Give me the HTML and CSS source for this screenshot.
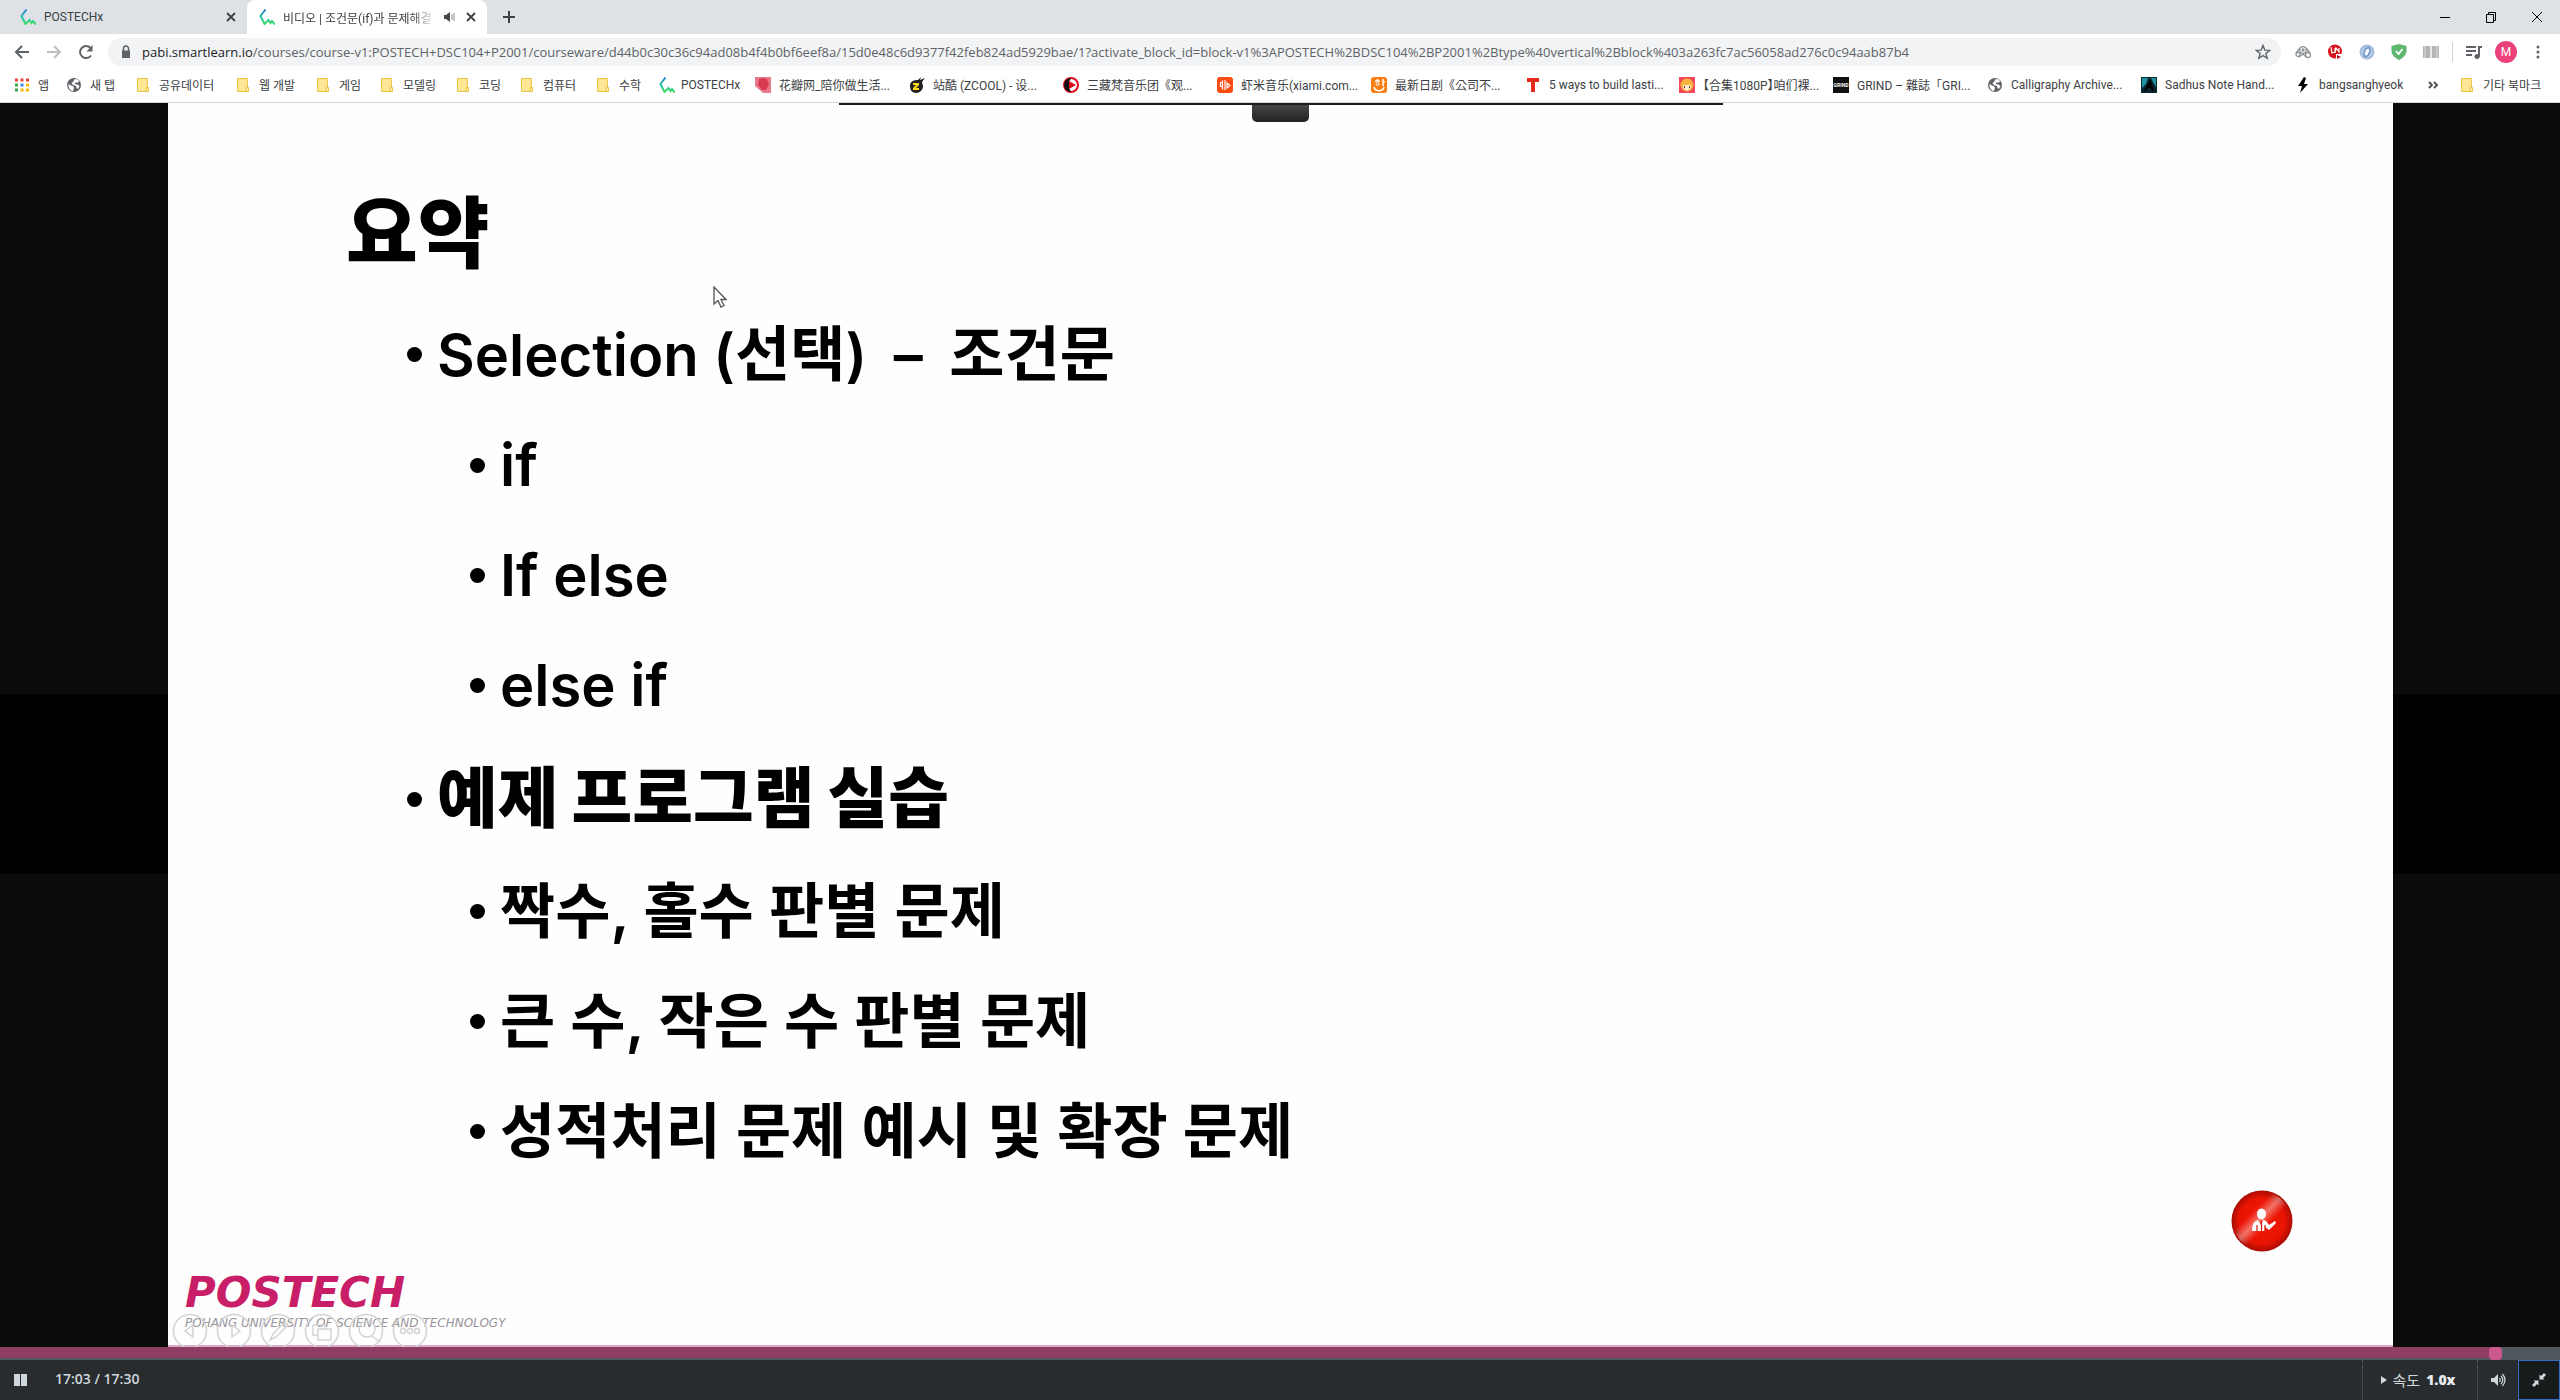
FILE: index.html
```html
<!DOCTYPE html>
<html lang="ko">
<head>
<meta charset="utf-8">
<title>비디오 | 조건문(if)과 문제해결</title>
<link rel="stylesheet" href="styles.css">
</head>
<body>
<svg class="defs" aria-hidden="true">
  <defs>
    <linearGradient id="brand" x1="0" y1="0" x2="0" y2="1"><stop offset="0" stop-color="#2f7fd0"/><stop offset=".55" stop-color="#1fc9a4"/><stop offset="1" stop-color="#3fdc5a"/></linearGradient>
    <radialGradient id="ball"><stop offset="0" stop-color="#f51a08"/><stop offset=".75" stop-color="#e81403"/><stop offset="1" stop-color="#a80c04"/></radialGradient>
    <linearGradient id="shine" x1="0" y1="0" x2="1" y2="1"><stop offset=".34" stop-color="#fff" stop-opacity="0"/><stop offset=".46" stop-color="#fff" stop-opacity=".4"/><stop offset=".58" stop-color="#fff" stop-opacity="0"/></linearGradient>
    <symbol id="px" viewBox="0 0 16 16"><path d="M6.500.500 1.500 7l4 8 4-4 2 3 1.500-2 3 3.500" fill="none" stroke="url(#brand)" stroke-width="2"/></symbol>
    <symbol id="x" viewBox="0 0 16 16"><path d="m4 4 8 8m0-8-8 8" stroke="#3c4043" stroke-width="1.800"/></symbol>
    <symbol id="folder" viewBox="0 0 16 16"><path d="M2.500 1.500h10v13h-10z" fill="#ffe694" stroke="#e8c34a"/><path d="M11 10.500h2.500v4H11z" fill="#ffe694" stroke="#e8c34a"/></symbol>
    <symbol id="globe" viewBox="0 0 16 16"><circle cx="8" cy="8" r="7" fill="#5f6368"/><path d="M2.500 7 5 8.500l2 .5 1 2-1 3C4 13.500 2 11 2.500 7zM8 2.500l3-.5 2.500 2.500-2 1-2 0-1 1.500 3 .5 2 1.500-1.500 3-1.500-1-.5-2-3-1-1.500-2 2-1.500z" fill="#fff"/></symbol>
  </defs>
</svg>

<header class="browser">
  <div class="tabs">
    <div class="tab"><svg class="ic"><use href="#px"/></svg><span class="tab-name">POSTECHx</span><button aria-label="탭 닫기"><svg class="ic"><use href="#x"/></svg></button></div>
    <div class="tab active"><svg class="ic"><use href="#px"/></svg><span class="tab-name">비디오 | 조건문(if)과 문제해결</span><svg class="ic speaker" viewBox="0 0 16 16"><path d="M3 6h2l4-3v10l-4-3H3z" fill="#45494d"/><path d="M11 5v6M13 4v8" stroke="#8a8d91"/></svg><button aria-label="탭 닫기"><svg class="ic"><use href="#x"/></svg></button></div>
    <button class="new-tab" aria-label="새 탭"><svg class="ic" viewBox="0 0 16 16"><path d="M8 2v12M2 8h12" stroke="#3c4043" stroke-width="2"/></svg></button>
    <div class="window-buttons">
      <button aria-label="최소화"><svg class="ic" viewBox="0 0 16 16"><path d="M3 8.500h10" stroke="#000"/></svg></button>
      <button aria-label="이전 크기로"><svg class="ic" viewBox="0 0 16 16"><path d="M3.500 5.500h7v8h-7zM5.500 5V3.500h7v8H11" fill="none" stroke="#000"/></svg></button>
      <button aria-label="닫기"><svg class="ic" viewBox="0 0 16 16"><path d="m3 3 10 10m0-10L3 13" stroke="#000"/></svg></button>
    </div>
  </div>

  <div class="toolbar">
    <button aria-label="뒤로"><svg class="ic" viewBox="0 0 16 16"><path d="M15 8H2m6-6L2 8l6 6" fill="none" stroke="#5f6368" stroke-width="2"/></svg></button>
    <button aria-label="앞으로"><svg class="ic" viewBox="0 0 16 16"><path d="M1 8h13M8 2l6 6-6 6" fill="none" stroke="#bdbfc2" stroke-width="2"/></svg></button>
    <button aria-label="새로고침"><svg class="ic" viewBox="0 0 16 16"><path d="M13 11.500A6 6 0 1 1 12.500 4" fill="none" stroke="#5f6368" stroke-width="2"/><path d="M14.500 1v6.500H8.500z" fill="#5f6368"/></svg></button>
    <div class="address">
      <svg class="ic" viewBox="0 0 16 16"><path d="M4 6.500h8V14H4z" fill="#5f6368"/><path d="M5.500 7V4.500a2.500 2.500 0 0 1 5 0V7" fill="none" stroke="#5f6368" stroke-width="1.500"/></svg>
      <span class="url"><b>pabi.smartlearn.io</b>/courses/course-v1:POSTECH+DSC104+P2001/courseware/d44b0c30c36c94ad08b4f4b0bf6eef8a/15d0e48c6d9377f42feb824ad5929bae/1?activate_block_id=block-v1%3APOSTECH%2BDSC104%2BP2001%2Btype%40vertical%2Bblock%403a263fc7ac56058ad276c0c94aab87b4</span>
      <svg class="ic" viewBox="0 0 16 16"><path d="m8 1.500 1.800 4.600 4.900.3-3.800 3.100 1.300 4.800L8 11.600l-4.200 2.700 1.300-4.800-3.800-3.100 4.900-.3z" fill="none" stroke="#5f6368" stroke-width="1.400"/></svg>
    </div>
    <div class="actions">
      <div class="extensions">
        <svg class="ic" viewBox="0 0 16 16"><g fill="none" stroke="#8e9194" stroke-width="1.300"><circle cx="3" cy="10.500" r="2"/><circle cx="13" cy="11" r="2.500"/><circle cx="8" cy="6" r="3.300"/><circle cx="8" cy="6" r="1"/><path d="m11 4 4 5M1 9l4-5M4 13l4-3 3 3"/></g></svg>
        <svg class="ic" viewBox="0 0 16 16"><circle cx="8" cy="7.500" r="7" fill="#d8121a"/><path d="m4 3 1 6 3-1M8 4v5l1-5 3 4V4" fill="none" stroke="#fff" stroke-width="1.200"/><path d="M9 10h7v6H9z" fill="#fff"/><path d="M10 11v4l4-2z" fill="#b01016"/></svg>
        <svg class="ic" viewBox="0 0 16 16"><circle cx="8" cy="8" r="6.500" fill="#b4cbe6" stroke="#a3bddd" stroke-width="2"/><ellipse cx="8" cy="8" rx="2.500" ry="4.500" fill="#fff" stroke="#6a8fc2" stroke-width="1.500" transform="rotate(20 8 8)"/></svg>
        <svg class="ic" viewBox="0 0 16 16"><path d="M8 0 15.500 2v5c0 4-3.500 7-7.500 9C4 14 .500 11 .500 7V2z" fill="#5fb870"/><path d="m5 7 2.500 3L11.500 5" fill="none" stroke="#fff" stroke-width="1.800"/></svg>
        <svg class="ic" viewBox="0 0 16 16"><path d="M0 2h7.300v12H0zM8.700 2H16v12H8.700z" fill="#b5b5b5"/><path d="M2 2v12M14 2v12" stroke="#ddd"/></svg>
      </div>
      <i class="divider"></i>
      <svg class="ic" viewBox="0 0 16 16"><path d="M0 3h10M0 7h10M0 11h6M13 13V3h3" fill="none" stroke="#5f6368" stroke-width="2"/><circle cx="11" cy="12.500" r="2.500" fill="#5f6368"/></svg>
      <button class="avatar">M</button>
      <button aria-label="메뉴"><svg class="ic" viewBox="0 0 16 16"><g fill="#5f6368"><circle cx="8" cy="3" r="1.500"/><circle cx="8" cy="8" r="1.500"/><circle cx="8" cy="13" r="1.500"/></g></svg></button>
    </div>
  </div>

  <nav class="bookmarks">
    <a class="w1" href="#"><svg class="ic" viewBox="0 0 16 16"><path d="M1 1.500h3v3H1z M6.500 1.500h3v3h-3z M12 1.500h3v3h-3z" fill="#ea4335"/><path d="M1 6.500h3v3H1zM1 11.500h3v3H1z" fill="#34a853"/><path d="M6.500 6.500h3v3h-3z" fill="#4285f4"/><path d="M12 6.500h3v3h-3zM6.500 11.500h3v3h-3zM12 11.500h3v3h-3z" fill="#fbbc05"/></svg>앱</a>
    <a class="w2" href="#"><svg class="ic"><use href="#globe"/></svg>새 탭</a>
    <a class="w4" href="#"><svg class="ic"><use href="#folder"/></svg>공유데이터</a>
    <a class="w3" href="#"><svg class="ic"><use href="#folder"/></svg>웹 개발</a>
    <a class="w5" href="#"><svg class="ic"><use href="#folder"/></svg>게임</a>
    <a class="w6" href="#"><svg class="ic"><use href="#folder"/></svg>모델링</a>
    <a class="w5" href="#"><svg class="ic"><use href="#folder"/></svg>코딩</a>
    <a class="w6" href="#"><svg class="ic"><use href="#folder"/></svg>컴퓨터</a>
    <a class="w5" href="#"><svg class="ic"><use href="#folder"/></svg>수학</a>
    <a class="w7" href="#"><svg class="ic"><use href="#px"/></svg>POSTECHx</a>
    <a class="w8" href="#"><svg class="ic" viewBox="0 0 16 16"><path d="M0 0h16v16H8L0 9z" fill="#e8798a"/><path d="M4 2 8 1l4 1 2 5-3 6H7L3 8z" fill="#d9394d"/></svg>花瓣网_陪你做生活...</a>
    <a class="w8" href="#"><svg class="ic" viewBox="0 0 16 16"><path d="M1 9c0-5 4-6 8-6l3-3-1 3 5-2-3 4 1 4c0 4-3 7-7 7s-6-3-6-7z" fill="#222"/><path d="M4 6h6v2l-3 3h3v2H4v-2l3-3H4z" fill="#ffd91a"/></svg>站酷 (ZCOOL) - 设...</a>
    <a class="w8" href="#"><svg class="ic" viewBox="0 0 16 16"><circle cx="8" cy="8" r="7" fill="#fff" stroke="#e00b1c" stroke-width="2"/><path d="M8 1a7 7 0 0 0 0 14l-2-4V5z" fill="#111"/><path d="M6 4v8l7-4z" fill="#e00b1c"/></svg>三藏梵音乐团《观...</a>
    <a class="w8" href="#"><svg class="ic" viewBox="0 0 16 16"><rect width="16" height="16" rx="3" fill="#fb4a12"/><path d="M5.500 5.500h-2v4h2zm0-2v9M8 3v10M10 6v5l3-2.500z" fill="none" stroke="#fff" stroke-width="1.200"/></svg>虾米音乐(xiami.com...</a>
    <a class="w8" href="#"><svg class="ic" viewBox="0 0 16 16"><rect width="16" height="16" rx="3" fill="#fb7d10"/><path d="M4 4h5M6.500 2v2M12 2v7M12 5h2M3 10c1 5 9 5 10 0" fill="none" stroke="#fff" stroke-width="1.500"/><circle cx="6.500" cy="7" r="1.500" fill="none" stroke="#fff"/></svg>最新日剧《公司不...</a>
    <a class="w8" href="#"><svg class="ic" viewBox="0 0 16 16"><path d="M2 1h12v4h-4v10H6V5H2z" fill="#e62b1e"/></svg>5 ways to build lasti...</a>
    <a class="w8 tight" href="#"><svg class="ic" viewBox="0 0 16 16"><path d="M0 0h16v16H0z" fill="#f5475a"/><circle cx="8" cy="8" r="6.500" fill="#f7b33c"/><path d="M4 8h8v3l-4 3-4-3z" fill="#ffe9cf"/><path d="M5.500 9v2M10.500 9v2" stroke="#5b3a1e"/></svg>【合集1080P】咱们裸...</a>
    <a class="w8" href="#"><svg class="ic" viewBox="0 0 16 16"><path d="M0 0h16v16H0z" fill="#111"/><text x="8" y="10" class="tiny">GRIND</text></svg>GRIND – 雜誌「GRI...</a>
    <a class="w8" href="#"><svg class="ic"><use href="#globe"/></svg>Calligraphy Archive...</a>
    <a class="w8" href="#"><svg class="ic" viewBox="0 0 16 16"><path d="M0 0h16v16H0z" fill="#08262c"/><path d="M1 1h6l-2 6-4 4zM10 1h5v9l-3-5z" fill="#1c94a3"/><path d="m4 14 5-9 3 9M6 10h5" fill="none" stroke="#000" stroke-width="2"/></svg>Sadhus Note Hand...</a>
    <a class="w9" href="#"><svg class="ic" viewBox="0 0 16 16"><path d="M9 0 3 9h4l-2 7 8-9H9l2-6z" fill="#000"/></svg>bangsanghyeok</a>
    <button class="more" aria-label="북마크 더보기"><svg class="ic" viewBox="0 0 16 16"><path d="m4 5 3 3-3 3m5-6 3 3-3 3" fill="none" stroke="#4a4d51" stroke-width="1.800"/></svg></button>
    <i class="divider"></i>
    <a class="other" href="#"><svg class="ic"><use href="#folder"/></svg>기타 북마크</a>
  </nav>
</header>

<main class="stage">
  <article class="slide">
    <div class="pull"><span></span></div>
    <h1>요약</h1>
    <ul class="outline">
      <li>Selection (<span class="ko">선택</span>) <span class="dash">–</span> <span class="ko">조건문</span>
        <ul><li>if</li><li>If else</li><li>else if</li></ul>
      </li>
      <li class="strong"><strong>예제 프로그램 실습</strong>
        <ul class="ko"><li>짝수, 홀수 판별 문제</li><li>큰 수, 작은 수 판별 문제</li><li>성적처리 문제 예시 및 확장 문제</li></ul>
      </li>
    </ul>
    <footer class="logo"><b>POSTECH</b><small>POHANG UNIVERSITY OF SCIENCE AND TECHNOLOGY</small></footer>
    <svg class="show-tools" viewBox="0 0 256 34" aria-hidden="true"><g fill="none" stroke="#d5d2d4" stroke-width="1.500"><circle cx="18" cy="18" r="16.500"/><circle cx="62" cy="18" r="16.500"/><circle cx="106" cy="18" r="16.500"/><circle cx="150" cy="18" r="16.500"/><circle cx="194" cy="18" r="16.500"/><circle cx="238" cy="18" r="16.500"/><path d="M21 12v12l-8-6zM60 12v12l8-6zM98 27l3-6 12-12 3 3-12 12zM146 16h13v11h-13zM141 12h12v4M141 12v10h5M200 23l8 6"/><circle cx="195" cy="16" r="8"/><circle cx="231" cy="18" r="2.500"/><circle cx="238" cy="18" r="2.500"/><circle cx="245" cy="18" r="2.500"/></g></svg>
    <svg class="ball" viewBox="0 0 62 62"><circle cx="31" cy="31" r="30.500" fill="url(#ball)"/><circle cx="31" cy="31" r="29" fill="url(#shine)"/><g fill="#fff"><ellipse cx="30.500" cy="24" rx="4.500" ry="5.500"/><path d="M21 41c0-6 2-10 6-11l3 5 2-5c3 0 4 2 6 5l6-4 1 2-7 7-4-3v4z"/></g><path d="M26 35v6M30.500 31v10M34 35v6" stroke="#d81505" stroke-width="1.200"/></svg>
    <svg class="cursor" viewBox="0 0 14 22"><path d="M1 1v17l4-3.500 3 6.500 3-1.500-3-6h5z" fill="#fff" stroke="#555" stroke-width="1.300"/></svg>
  </article>
</main>

<section class="controls">
  <div class="progress"><div class="played" style="width:97.500%"></div></div>
  <div class="buttons">
    <button class="pause" aria-label="일시정지"><svg viewBox="0 0 13 12"><path d="M0 0h6v12H0zM7 0h6v12H7z" fill="#cfd8dc"/></svg></button>
    <div class="time">17:03 / 17:30</div>
    <button class="speed"><svg viewBox="0 0 6 8"><path d="M0 0 6 4 0 8z" fill="#cfd8dc"/></svg><span>속도</span><b>1.0x</b></button>
    <button class="volume" aria-label="음량"><svg class="ic" viewBox="0 0 16 16"><path d="M1 6h3l4-4v12l-4-4H1z" fill="#cfd8dc"/><path d="M9.500 6q1.500 2 0 4M11 4q3.500 4 0 8M12.500 2q5 6 0 12" fill="none" stroke="#cfd8dc" stroke-width="1.200"/></svg></button>
    <button class="shrink" aria-label="전체화면 종료"><svg class="ic" viewBox="0 0 16 16"><path d="M8.500 7.500V2.500l1.500 1.500L13 1l2 2-3 3 1.500 1.500zM7.500 8.500v5L6 12l-3 3-2-2 3-3-1.500-1.500z" fill="#cfd8dc"/></svg></button>
  </div>
</section>
</body>
</html>
```
FILE: styles.css
```css
* { box-sizing: border-box; }
body { margin: 0; min-height: 100vh; display: flex; flex-direction: column; background: #0b0b0b; font-family: "Open Sans", "Noto Sans CJK KR", sans-serif; }
button { border: 0; padding: 0; background: none; font: inherit; color: inherit; display: flex; align-items: center; justify-content: center; }
svg { display: block; flex: none; }
.defs { position: absolute; width: 0; height: 0; }
.ic { width: 16px; height: 16px; }

/* browser chrome */
.browser { background: #fff; border-bottom: 1px solid #d5d7da; color: #3c4043; font-family: Roboto, "Noto Sans CJK KR", "Noto Sans CJK SC", sans-serif; font-size: 12px; }
.tabs { display: flex; height: 34px; background: #dee1e6; }
.tab { display: flex; align-items: center; width: 247px; padding: 0 8px 0 20px; }
.tab.active { width: 240px; padding: 0 8px 0 12px; background: #fff; border-radius: 8px 8px 0 0; }
.tab-name { flex: 1; margin-left: 8px; overflow: hidden; white-space: nowrap; }
.active .tab-name { -webkit-mask-image: linear-gradient(90deg, #000 85%, transparent); mask-image: linear-gradient(90deg, #000 85%, transparent); }
.speaker { margin: 0 6px; }
.new-tab { margin-left: 14px; }
.window-buttons { display: flex; gap: 30px; margin-left: auto; padding-right: 15px; }

.toolbar { display: flex; align-items: center; gap: 16px; height: 35px; padding: 0 14px; }
.address { flex: 1; display: flex; align-items: center; height: 28px; margin-left: -2px; padding: 0 10px; border-radius: 14px; background: #f1f3f4; }
.url { flex: 1; margin-left: 8px; font-family: "Open Sans", sans-serif; font-size: 13px; color: #5f6368; white-space: nowrap; }
.url b { font-weight: 400; color: #202124; }
.actions { display: flex; align-items: center; gap: 13px; margin-left: -2px; }
.extensions { display: flex; gap: 16px; }
.divider { width: 1px; height: 20px; background: #d0d2d5; }
.avatar { width: 22px; height: 22px; border-radius: 50%; background: #ec407a; color: #fff; font-size: 12px; }

.bookmarks { display: flex; align-items: center; height: 33px; padding: 0 14px 2px; }
.bookmarks a { display: flex; align-items: center; gap: 8px; flex: none; color: inherit; text-decoration: none; white-space: nowrap; }
.w1 { width: 52px; }
.w2 { width: 69px; }
.w3 { width: 80px; }
.w4 { width: 100px; }
.w5 { width: 64px; }
.w6 { width: 76px; }
.bookmarks .w7 { width: 96px; gap: 6px; }
.w8 { width: 154px; }
.w9 { width: 130px; }
.tight { font-feature-settings: "halt"; }
.tiny { font-size: 5px; font-weight: 700; fill: #fff; text-anchor: middle; }
.more { margin-left: auto; }
.bookmarks .divider { margin: 0 8px 0 10px; }
.bookmarks .other { width: 90px; }

/* lecture video */
.stage { flex: 1; display: flex; padding: 0 167px 0 168px; background: linear-gradient(#0b0b0b 0 47.500%, #000 47.500% 62%, #0b0b0b 62%); }
.slide { position: relative; flex: 1; display: flex; flex-direction: column; background: #fefefe; border-bottom: 2px solid #dba9c3; color: #000; font-family: Inter, "Noto Sans CJK KR", sans-serif; }
.pull { align-self: center; width: 884px; height: 19px; border-top: 2px solid #1c1c1c; }
.pull span { display: block; width: 57px; height: 17px; margin: 0 auto; border-radius: 0 0 5px 5px; background: linear-gradient(#454545, #222); }
h1 { margin: 52px 0 0 178px; font-size: 78px; line-height: 120px; font-weight: 900; }
.outline { margin: 5px 0 0 239px; padding: 0; list-style: none; font-size: 58px; line-height: 110px; font-weight: 600; }
.outline li { padding-left: 30px; }
.outline ul { margin: 0; padding: 0 0 0 33px; list-style: none; }
.outline li::before { content: ""; float: left; width: 15px; height: 15px; margin: 48px 0 0 -30px; border-radius: 50%; background: #000; }
.outline .strong::before { margin-top: 52px; }
.outline strong { display: block; font-size: 66px; line-height: 116px; font-weight: 900; }
.outline .ko { font-size: 60px; }
.dash { margin: 0 12px; }
.logo { display: flex; flex-direction: column; margin: auto 0 15px 17px; font-family: "DejaVu Sans", sans-serif; font-style: italic; }
.logo b { color: #c81e68; font-size: 42px; line-height: 46px; }
.logo small { color: #98949a; font-size: 12px; line-height: 14px; }
.show-tools { position: absolute; left: 4px; bottom: -2px; width: 256px; height: 34px; }
.ball { position: absolute; right: 100px; bottom: 93px; width: 62px; height: 62px; }
.cursor { position: absolute; left: 545px; top: 183px; width: 14px; height: 22px; }

/* player controls */
.controls { background: #282c2e; color: #cfd8dc; }
.progress { height: 13px; background: #4f595d; }
.played { position: relative; height: 11px; background: #8e3e63; }
.played::after { content: ""; position: absolute; right: -6px; top: 0; width: 13px; height: 13px; border-radius: 4px; background: #cb598d; }
.buttons { display: flex; align-items: center; height: 40px; font-size: 14px; line-height: 20px; font-weight: 600; }
.pause { width: 13px; margin: 0 28px 0 14px; }
.pause svg { width: 13px; height: 12px; }
.time { flex: 1; padding-bottom: 2px; }
.buttons > button { height: 40px; }
.speed { width: 115px; padding-right: 4px; gap: 6px; border-left: 1px dotted #5c6569; }
.speed svg { width: 6px; height: 8px; }
.speed span { font-size: 15px; font-weight: 400; }
.speed b { color: #e7ecee; }
.volume { width: 41px; border-left: 1px dotted #5c6569; }
.buttons > .shrink { width: 42px; border: 1px solid #3b6bc0; background: #171b1c; }
```
